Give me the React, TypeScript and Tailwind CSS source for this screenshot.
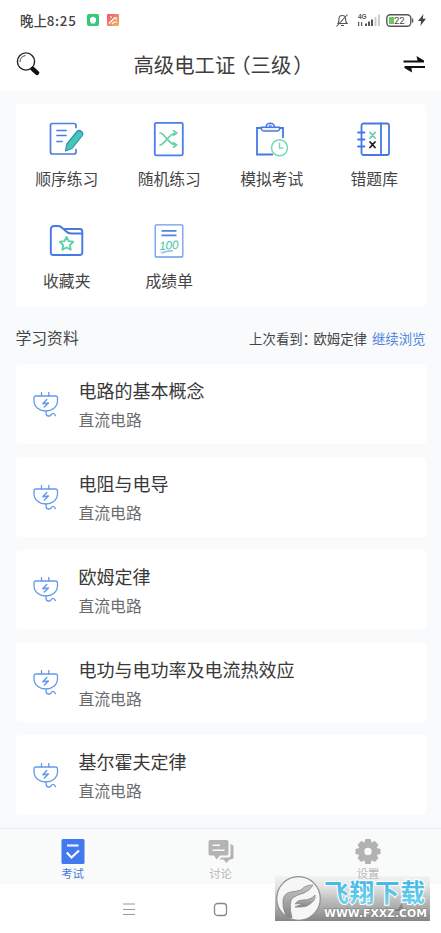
import type { ReactNode } from "react";

interface Shortcut {
  label: string;
  icon: ReactNode;
}

interface Lesson {
  title: string;
  category: string;
}

const OrderIcon = () => (
  <svg width="36" height="36" viewBox="0 0 36 36" fill="none" stroke="#4a7fe0" strokeWidth="1.7" strokeLinecap="round" strokeLinejoin="round">
    <path d="M27 6.500V4.500Q27 2.500 25 2.500H3.500Q1.500 2.500 1.500 4.500V31Q1.500 33 3.500 33H25Q27 33 27 31V28.500" />
    <path d="M8 9.500h9M8 14.500h9M8 20.500h5" />
    <path d="M16.500 30L17.800 23L28 10.500Q30 8.500 32.500 10.500Q34.800 12.500 33 15L23 27.500Z" fill="#43c8b8" stroke="#348fb0" strokeWidth="1.200" />
  </svg>
);

const RandomIcon = () => (
  <svg width="36" height="36" viewBox="0 0 36 36" fill="none" strokeLinecap="round" strokeLinejoin="round">
    <rect x="3.800" y="1.800" width="28" height="32.500" rx="1.500" stroke="#4a7ee8" strokeWidth="1.800" />
    <g stroke="#67d3a6" strokeWidth="1.700">
      <path d="M9 12c5 0 8.500 12 16 12M9 24c5 0 8.500-12 16-12" />
      <path d="M22.500 9.800l3.300 2.200-3.300 2.300M22.500 21.700l3.300 2.300-3.300 2.200" />
    </g>
  </svg>
);

const ExamIcon = () => (
  <svg width="36" height="36" viewBox="0 0 36 36" fill="none" stroke="#4679e4" strokeWidth="1.800">
    <path d="M7 7H3V33.500H19M25 7H29V17" />
    <path d="M7.500 6.300H25.500V8.500Q25 10 23 10H10Q8 10 7.500 8.500Z" fill="#eef4ff" strokeWidth="1.400" />
    <path d="M12 6.200Q12.500 2.300 16.300 2.300Q20 2.300 20.700 6.200" strokeWidth="1.500" />
    <circle cx="16.300" cy="5" r="1" strokeWidth="1" />
    <circle cx="25.500" cy="26.800" r="8" fill="#fff" stroke="#74d8b8" strokeWidth="1.500" />
    <path d="M25.500 21.800V27.100H29.500" stroke="#74d8b8" strokeWidth="1.400" />
  </svg>
);

const WrongIcon = () => (
  <svg width="36" height="36" viewBox="0 0 36 36" fill="none" stroke="#4679e4" strokeWidth="1.800" strokeLinecap="round">
    <rect x="5.500" y="2.500" width="27.500" height="31.500" rx="2" />
    <path d="M25 2.500V34M2 11.500h6.500M2 18.500h6.500M2 25.500h6.500" />
    <path d="M14 11.500l5 5.500M19 11.500l-5 5.500" stroke="#65cbb0" />
    <path d="M14 21l5 5.500M19 21l-5 5.500" stroke="#222" />
  </svg>
);

const FavoriteIcon = () => (
  <svg width="36" height="36" viewBox="0 0 36 36" fill="none" stroke="#4679e4" strokeWidth="1.900" strokeLinejoin="round">
    <path d="M1.800 6.500Q1.800 3 5.300 3H9.300Q11.300 3 13.300 5L17.300 8.500Q19.300 10.500 22.300 10.500H33.300V29.500Q33.300 32 30.800 32H4.300Q1.800 32 1.800 29.500Z" />
    <path d="M14.300 6H30.800Q33.300 6 33.300 8.500V11" />
    <path d="M17.600 14l2 4.100 4.600 .7-3.300 3.300 .8 4.600-4.100-2.200-4.200 2.200 .8-4.600-3.300-3.300 4.600-.7z" stroke="#5bd0aa" />
  </svg>
);

const ScoreIcon = () => (
  <svg width="36" height="36" viewBox="0 0 36 36" fill="none">
    <rect x="4.200" y="1.800" width="27.600" height="32.200" rx="1" stroke="#6c9bea" strokeWidth="1.300" />
    <path d="M10.500 7.800h15M10.500 12.300h15" stroke="#4e85de" strokeWidth="1.800" />
    <text x="8" y="26.500" textLength="19.500" transform="rotate(-5 18 22)" fontFamily="'Liberation Sans', sans-serif" fontSize="12" fontStyle="italic" fill="#42c9a6">
      100
    </text>
    <path d="M9.500 29.500Q16 27.500 22 27.700Q16 28.300 11 30.500" stroke="#86a9e5" strokeWidth=".8" />
  </svg>
);

const PlugIcon = () => (
  <svg width="26" height="28" viewBox="0 0 26 28" fill="none" stroke="#6699eb" strokeWidth="1.300" strokeLinecap="round" strokeLinejoin="round">
    <path d="M8.500 .5v3.500M15.800 .5v3.500" />
    <path d="M3 4H22.500Q24.500 4 24.500 6V8.500C24.500 15 19 19 12.800 19S1 15 1 8.500V6Q1 4 3 4Z" />
    <path d="M13.800 7.500L9.800 11.800L15.500 11L11.300 15" strokeWidth="1.400" />
    <path d="M13 19.200v1.500Q13 24 15.500 24H16.500C18.500 24 18 21.300 20 21.300Q21.500 21.300 22.500 23.700" />
  </svg>
);

const shortcuts: Shortcut[] = [
  { label: "顺序练习", icon: <OrderIcon /> },
  { label: "随机练习", icon: <RandomIcon /> },
  { label: "模拟考试", icon: <ExamIcon /> },
  { label: "错题库", icon: <WrongIcon /> },
  { label: "收藏夹", icon: <FavoriteIcon /> },
  { label: "成绩单", icon: <ScoreIcon /> },
];

const lessons: Lesson[] = [
  { title: "电路的基本概念", category: "直流电路" },
  { title: "电阻与电导", category: "直流电路" },
  { title: "欧姆定律", category: "直流电路" },
  { title: "电功与电功率及电流热效应", category: "直流电路" },
  { title: "基尔霍夫定律", category: "直流电路" },
];

const StatusBar = () => (
  <div className="flex h-10 items-center justify-between pl-5 pr-[15px] text-[#444]">
    <div className="flex items-center">
      <span className="flex w-[60px] whitespace-nowrap text-[13.400px] font-medium">
        <span>晚上</span>
        <span className="tracking-[0.700px]">8:25</span>
      </span>
      <svg className="ml-[7px]" width="12" height="12" viewBox="0 0 12 12">
        <rect width="12" height="12" rx="2" fill="#32cb75" />
        <path d="M6 2.500L9 4.200V7L7.800 9.500H4.200L3 7V4.200Z" fill="#fff" />
      </svg>
      <svg className="ml-[8px]" width="12" height="12" viewBox="0 0 12 12">
        <defs>
          <linearGradient id="app" x1="0" y1="0" x2="1" y2="1">
            <stop stopColor="#ed547d" />
            <stop offset="1" stopColor="#f5b84c" />
          </linearGradient>
        </defs>
        <rect width="12" height="12" rx="1" fill="url(#app)" />
        <path d="M2 9.500L8 3.500M3 3h2M7 8h3M9 3v3M5 10l2-2" stroke="#fff" strokeWidth="1.200" />
      </svg>
    </div>
    <div className="flex items-center">
      <svg width="14" height="15" viewBox="0 0 14 15" fill="none" stroke="#555" strokeWidth="1.100">
        <path d="M3 10.500Q4 9 4 5.500Q4 2.500 7.200 2.500T10.500 5.500Q10.500 9 12 10.500ZM6 12.500h3M12.500 1.500L1.500 13.500" />
      </svg>
      <svg className="ml-[8px]" width="24" height="15" viewBox="0 0 24 15" fill="#555">
        <text x="1" y="6" fontSize="6.500" fontWeight="700" fontFamily="'Liberation Sans', sans-serif">4G</text>
        <path d="M1 9h1.200v4H1zM4 9h1.200v4H4zM8 10.500h2v2.500H8zM11 8.500h2V13h-2zM14 6.500h2V13h-2z" />
        <path d="M17.500 4h2v9h-2zM21 1.500h2V13h-2z" fill="#ccc" />
      </svg>
      <svg className="ml-[5px]" width="28" height="13" viewBox="0 0 28 13">
        <rect x=".8" y=".8" width="24" height="11.400" rx="3.500" fill="none" stroke="#555" strokeWidth="1.400" />
        <path d="M3 3h5v7H3z" fill="#6bc85a" />
        <path d="M26 4.500h1.200v4H26z" fill="#555" />
        <text x="8" y="9.800" fontSize="9.500" fill="#444" fontFamily="Roboto, sans-serif">22</text>
      </svg>
      <svg className="ml-[4px]" width="8" height="12" viewBox="0 0 8 12" fill="#444">
        <path d="M5.500 0L0 7H3.200L2.300 12L8 4.800H4.700Z" />
      </svg>
    </div>
  </div>
);

const Header = () => (
  <header className="flex h-[51px] items-center justify-between pb-[3px] pl-4 pr-[15px]">
    <svg width="24" height="24" viewBox="0 0 24 24" fill="none">
      <circle cx="10" cy="9.500" r="8.600" stroke="#222" strokeWidth="1.400" />
      <path d="M4 10Q4 4.500 9.500 3.500" stroke="#444" strokeWidth="1" />
      <path d="M15.500 15.500L17.500 17.500" stroke="#111" strokeWidth="2" />
      <path d="M16.800 17L21 20.800" stroke="#111" strokeWidth="4.400" strokeLinecap="round" />
    </svg>
    <h1 className="mr-[6px] flex text-[20.400px] text-[#3e3e3e] [font-feature-settings:'halt']">
      <span>高级电工证</span>
      <span className="ml-[5px]">（</span>
      <span>三级</span>
      <span className="ml-[2px]">）</span>
    </h1>
    <svg width="23" height="17" viewBox="0 0 23 17" fill="#111">
      <path d="M.5 4.500H14.500L13.500 0L21 4.500V6.500H.5ZM1.500 10H22V12H8.500L9 16.500L1.500 12Z" />
    </svg>
  </header>
);

const ShortcutPanel = () => (
  <section className="grid h-[203px] grid-cols-4 content-start rounded-[4px] bg-white pt-[17px]">
    {shortcuts.map((item) => (
      <button key={item.label} className="flex h-[102px] flex-col items-center">
        {item.icon}
        <span className="mt-[10px] text-[15.800px] leading-6 text-[#444]">{item.label}</span>
      </button>
    ))}
  </section>
);

const LessonCard = ({ title, category }: Lesson) => (
  <li className="flex h-[79.750px] items-center rounded-[4px] bg-white pl-[17px] pt-1">
    <PlugIcon />
    <div className="ml-5">
      <h3 className="text-[18px] leading-[29px] text-[#393939]">{title}</h3>
      <p className="text-[15.800px] leading-[30px] text-[#6b6b6b]">{category}</p>
    </div>
  </li>
);

const TabBar = () => (
  <nav className="grid h-14 grid-cols-3 border-t border-[#e6edf5] bg-[#f9fafa] pt-[9px] text-[11.300px] leading-4 text-[#b7b7b7]">
    <button className="flex flex-col items-center pr-[2px] text-[#4b7ce0]">
      <svg width="24" height="27" viewBox="0 0 24 27" fill="none">
        <rect x=".5" y="1" width="23" height="25" rx="1.500" fill="#4279ee" />
        <path d="M6 7.500H17.500" stroke="#e9f1ff" strokeWidth="2.200" />
        <path d="M5.800 14.500L10.500 19.500L18 12.500" stroke="#fff" strokeWidth="2.200" />
      </svg>
      <span>考试</span>
    </button>
    <button className="flex flex-col items-center">
      <svg width="26" height="27" viewBox="0 0 26 27" fill="#b4b4b4">
        <path fillRule="evenodd" d="M2.500 2H18.500Q20.500 2 20.500 4V15.500Q20.500 17.500 18.500 17.500H12L8.500 21.500L6 17.500H2.500Q.5 17.500 .5 15.500V4Q.5 2 2.500 2ZM4.500 6.500V8H12V6.500ZM4.500 11.500V13H16.500V11.500Z" />
        <path d="M22.500 6Q25.500 6.500 25.500 9V19Q25.500 21.500 22.500 21.500H21.500L18.500 25L15.500 21.500H11.500L13.500 19.500H20.500Q22.500 19.500 22.500 17.500Z" />
      </svg>
      <span>讨论</span>
    </button>
    <button className="flex flex-col items-center pl-px">
      <svg width="26" height="27" viewBox="0 0 26 27" fill="#b2b2b2">
        <path fillRule="evenodd" d="M9.500 4.500L10.300 1H15.700L16.500 4.500L19.800 3L23.500 6.800L21.700 10L25.500 11V16L21.700 17L23.500 20.300L19.800 24L16.500 22.300L15.700 26H10.300L9.500 22.300L6.200 24L2.500 20.300L4.300 17L.5 16V11L4.300 10L2.500 6.800L6.200 3ZM13 9.800A3.700 3.700 0 1 0 13 17.200A3.700 3.700 0 1 0 13 9.800Z" />
      </svg>
      <span>设置</span>
    </button>
  </nav>
);

const SystemNav = () => (
  <div className="flex h-[49px] items-start bg-white pl-[122px] pt-[18px]">
    <svg width="14" height="14" viewBox="0 0 14 14" stroke="#999" strokeWidth="1.200">
      <path d="M1 2h12M1 7.500h12M1 12.500h12" />
    </svg>
    <svg className="ml-[77px]" width="15" height="15" viewBox="0 0 15 15" fill="none" stroke="#888" strokeWidth="1.300">
      <rect x="1.500" y="1.500" width="12" height="12" rx="3" />
    </svg>
  </div>
);

const Watermark = () => (
  <svg className="absolute left-[275px] top-[876px]" width="155" height="45" viewBox="0 0 155 45">
    <defs>
      <linearGradient id="plate" x1="0" y1="0" x2="0" y2="1">
        <stop stopColor="#d8d8d8" stopOpacity=".2" />
        <stop offset=".5" stopColor="#bbb" stopOpacity=".9" />
        <stop offset="1" stopColor="#858585" />
      </linearGradient>
      <linearGradient id="wing" x1="0" y1="0" x2="0" y2="1">
        <stop stopColor="#c4c4c4" />
        <stop offset="1" stopColor="#858585" />
      </linearGradient>
      <linearGradient id="brand" x1="0" y1="0" x2="0" y2="1">
        <stop stopColor="#35aee0" />
        <stop offset="1" stopColor="#79d8f0" />
      </linearGradient>
    </defs>
    <rect width="155" height="45" fill="url(#plate)" />
    <circle cx="23.500" cy="22.500" r="21.800" fill="#f6f6f6" stroke="#8e8e8e" strokeWidth="1.200" />
    <g fill="url(#wing)" stroke="#888" strokeWidth=".8">
      <path d="M11 40Q7 31 8 24Q9 17 16 16Q21 15.500 26 14Q30 9 38 9Q35 14.500 29 17Q22 19 18 21.500Q13 26 17 42Q13 42 11 40Z" />
      <path d="M20 28Q22 24 28 24Q36 24 40 19Q41 24 35 28Q32 31 26 31H20Q24 29 28 28Q24 27 20 28Z" />
    </g>
    <text x="49" y="25.500" textLength="101" fontFamily="'Noto Sans CJK SC', sans-serif" fontSize="24.500" fontWeight="700" fill="url(#brand)" stroke="#fff" strokeWidth="2" paintOrder="stroke">
      飞翔下载
    </text>
    <path d="M116 33h7l4-6 1 6h4v2h-16z" fill="#555" opacity=".45" />
    <text x="49" y="41" textLength="103" lengthAdjust="spacingAndGlyphs" fontFamily="'DejaVu Sans', sans-serif" fontSize="10.500" fontWeight="700" fill="#fff" stroke="#777" strokeWidth="1" paintOrder="stroke">
      WWW.FXXZ.COM
    </text>
  </svg>
);

const App = () => {
  return (
    <div className="relative flex h-[933px] w-[441px] flex-col overflow-hidden bg-white font-['Noto_Sans_CJK_SC',sans-serif]">
      <StatusBar />
      <Header />
      <main className="h-[737px] bg-[#f9fafc] px-[15.500px] pt-[13px]">
        <ShortcutPanel />
        <div className="flex h-[57px] items-center justify-between pt-[5px] text-[#444]">
          <h2 className="text-[15.800px]">学习资料</h2>
          <div className="flex text-[13.400px]">
            <span>上次看到</span>
            <span className="mr-[4px] [font-feature-settings:'halt']">：</span>
            <span>欧姆定律</span>
            <a className="ml-[5px] text-[#5185df]">继续浏览</a>
          </div>
        </div>
        <ul className="flex flex-col gap-[13px]">
          {lessons.map((lesson) => (
            <LessonCard key={lesson.title} {...lesson} />
          ))}
        </ul>
      </main>
      <TabBar />
      <SystemNav />
      <Watermark />
    </div>
  );
};

export default App;
